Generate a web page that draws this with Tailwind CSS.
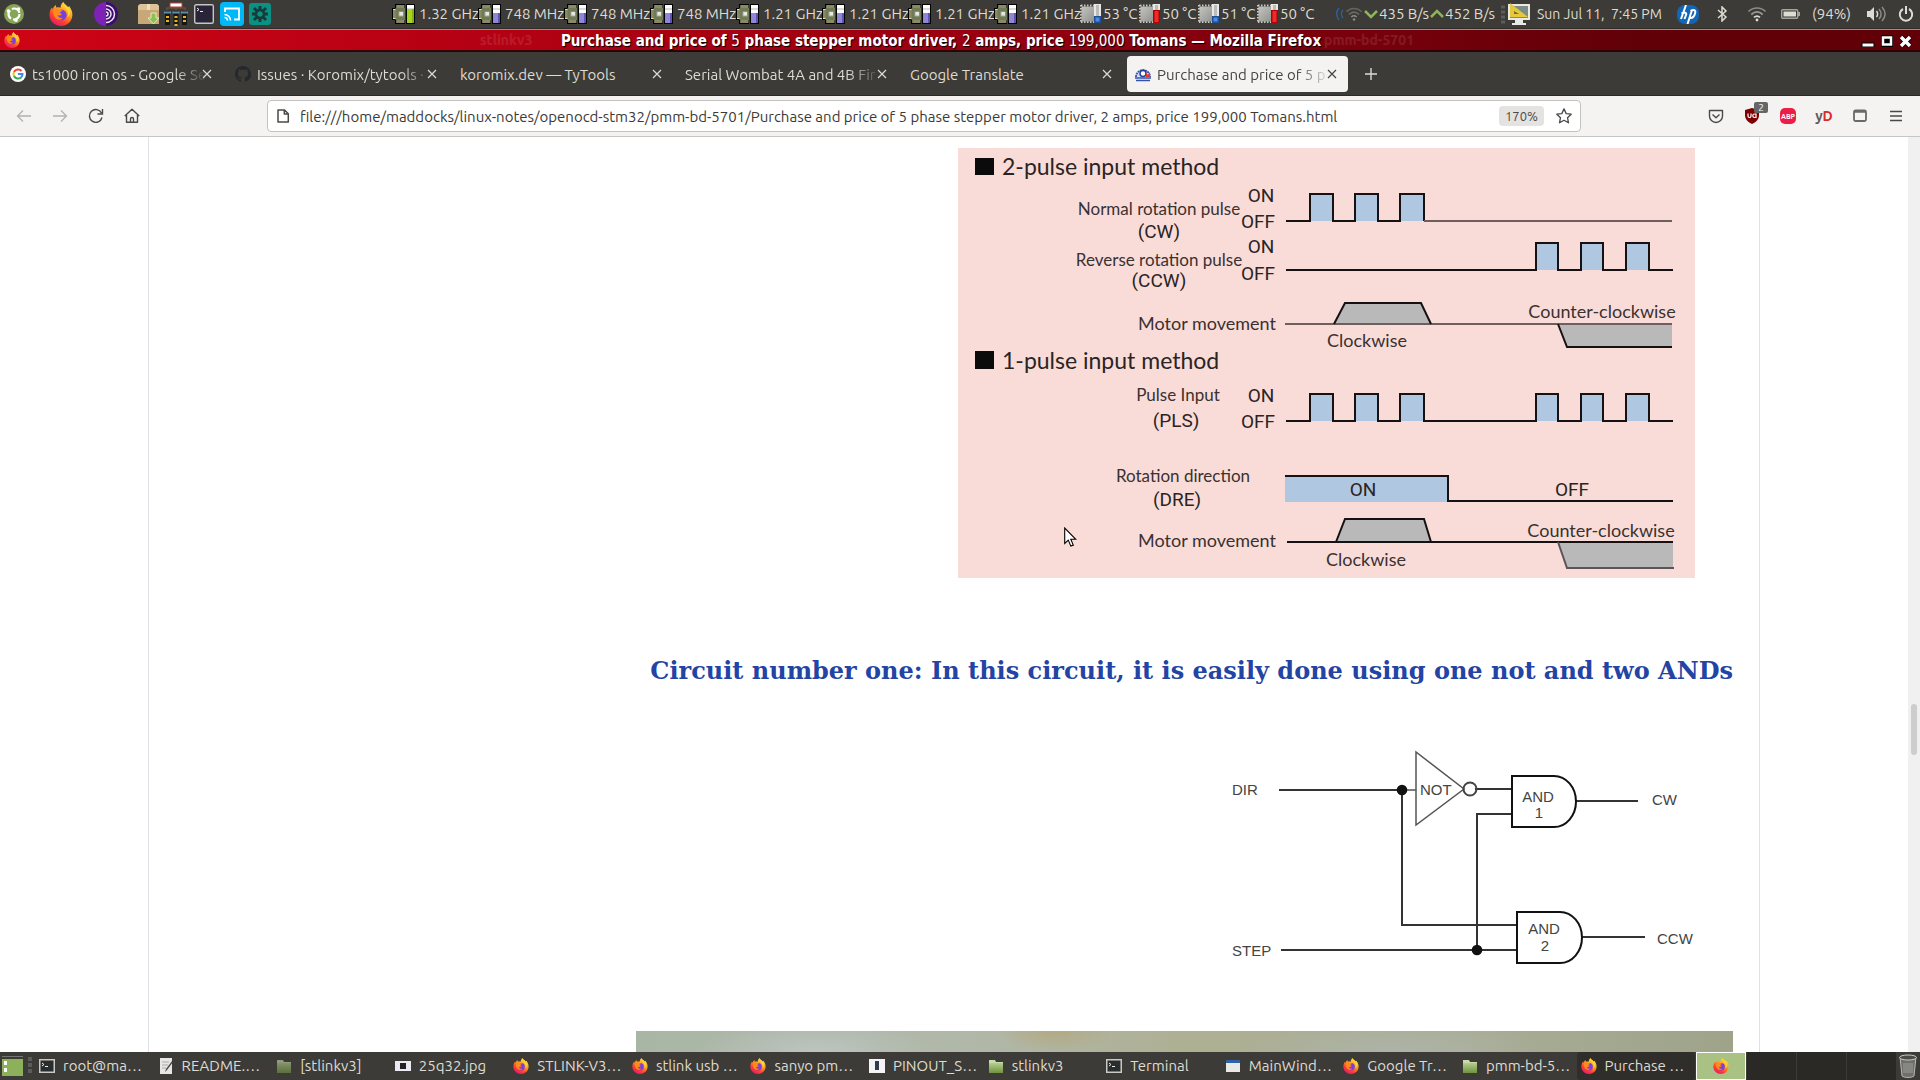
<!DOCTYPE html>
<html lang="en">
<head>
<meta charset="utf-8">
<title>Purchase and price of 5 phase stepper motor driver</title>
<script src="https://cdn.jsdelivr.net/npm/@tailwindcss/browser@4"></script>
</head>
<body class="flex h-screen flex-col overflow-hidden bg-white font-['Ubuntu','Noto_Sans',sans-serif] text-[15px] text-[#dfdbd2]">

<svg class="absolute size-0" aria-hidden="true">
  <defs>
    <linearGradient id="gFox" x1=".8" y1="0" x2=".2" y2="1"><stop offset="0" stop-color="#fff044"/><stop offset=".4" stop-color="#ff9a1f"/><stop offset=".7" stop-color="#ff4030"/><stop offset="1" stop-color="#e3107c"/></linearGradient>
    <linearGradient id="gFolder" x1="0" y1="0" x2="0" y2="1"><stop offset="0" stop-color="#b4cf8c"/><stop offset="1" stop-color="#71923f"/></linearGradient>
    <linearGradient id="gSilver" x1="0" y1="0" x2="1" y2="1"><stop offset="0" stop-color="#c4c4c0"/><stop offset="1" stop-color="#8f8f8b"/></linearGradient>
  </defs>
  <symbol id="firefox" viewBox="0 0 24 24">
    <path d="M14.500 0c.3 2 3 3 4.700 5.200l.8-1.200c2 2.500 3.600 5.500 3.400 9.200C23 19.500 18 24 12 24 5.500 24 .5 19 .5 12.800.5 9 2 6.500 3 5.500l.5 1.700C4.300 5.500 5.500 4 6.800 3l.4 2.600c1.500-.6 3.300-.4 4.300.1C11.500 3.500 12.500 1.200 14.500 0z" fill="url(#gFox)"/>
    <circle cx="12.300" cy="13" r="5.400" fill="#7b3fe0"/>
    <path d="M4.500 8c2-1.500 4.500-1.700 6-.4 1 .2 2.300.2 3 .7-.4 1.300-2.200 1.500-2.600 2.200.1 1 1.200 1.300 2.100 1.200-.4 2-3.400 2-4.400 1.300.5 2.500 3 3.500 5.300 2.800-1.600 2.800-6.400 2.500-8.300-.7C4.400 13 3.800 10 4.500 8z" fill="#ff8a1c"/>
    <path d="M17 7c2.500 2.500 2.600 6 1.400 8.500 2.400-1.500 3.500-5 2-8.500L15.500 2c.1 2 .4 3.700 1.500 5z" fill="#ffd53a"/>
  </symbol>
  <symbol id="chip" viewBox="0 0 24 20">
    <path d="M3 0h10v20H3zM0 4h16v12H0z" fill="#000"/>
    <path d="M4.500 1h8v3h-8zM4.500 16h8v3h-8zM1 5h3v10H1z" fill="#e8e4a8"/>
    <path d="M6 1v3M8 1v3M10 1v3M12 1v3M6 16v3M8 16v3M10 16v3M12 16v3M1 7h3M1 9h3M1 11h3M1 13h3" stroke="#000" stroke-width=".8"/>
    <path d="M3.500 4h10v12h-10z" fill="#6e7b56"/><path d="M6.500 7.500h5v5h-5z" fill="#a5ab98"/><path d="M7.500 8h3.500v3.500H7.500z" fill="#e6e6e2"/>
    <path d="M14 0h9v20h-9z" fill="#000"/><path d="M15 1h7v18h-7z" fill="#fff"/><path d="M15 5h7" stroke="#b5b5b5"/>
  </symbol>
  <symbol id="cpuhi" viewBox="0 0 24 20"><use href="#chip"/><path d="M15 5h7v14h-7z" fill="#a5d51f"/><path d="M20 5h2v14h-2z" fill="#83b00e"/></symbol>
  <symbol id="cpulo" viewBox="0 0 24 20"><use href="#chip"/><path d="M15 9h7v10h-7z" fill="#8f86d8"/><path d="M20 9h2v10h-2z" fill="#5f53b4"/></symbol>
  <symbol id="temp" viewBox="0 0 22 20">
    <path d="M1 1.500h16M1 18h16M1 1v18M16 1v18" stroke="#c9c9c4" stroke-width="2" stroke-dasharray="1.500 1.500"/>
    <path d="M1.500 2.500h14v15h-14z" fill="url(#gSilver)"/><path d="M14 0h7v18h-7z" fill="#e8e8e6"/><path d="M16 1h3v12h-3z" fill="#bbb"/>
  </symbol>
  <symbol id="tlo" viewBox="0 0 22 20"><use href="#temp"/><path d="M14 12h7v7h-7z" fill="#1f4f96"/><path d="M15.500 13.500h4v4h-4z" fill="#4d8be0"/></symbol>
  <symbol id="thi" viewBox="0 0 22 20"><use href="#temp"/><path d="M14 6h7v13h-7z" fill="#b40000"/><path d="M15.500 7h4v11h-4z" fill="#ee2b2b"/></symbol>
  <symbol id="wifi" viewBox="0 0 20 16"><g fill="none" stroke="currentColor" stroke-width="1.700"><path d="M1.500 5.500c5-4.700 12-4.700 17 0" opacity=".5"/><path d="M4.300 8.500c3.600-3.200 7.800-3.200 11.400 0" opacity=".6"/><path d="M7 11.300c2-1.700 4-1.700 6 0"/></g><circle cx="10" cy="14" r="1.400" fill="currentColor"/></symbol>
  <symbol id="x" viewBox="0 0 10 10"><path d="M1 1l8 8M9 1l-8 8" stroke="currentColor" stroke-width="1.200" fill="none"/></symbol>
  <symbol id="term" viewBox="0 0 16 16"><path d="M0 1h16v14H0z" fill="#c9c9c5"/><path d="M1.500 2.500h13v11h-13z" fill="#2a2d2d"/><path d="M3 5l2 1.500L3 8M6 8.500h3" stroke="#eee" fill="none"/></symbol>
  <symbol id="folder" viewBox="0 0 16 16"><path d="M1 2h6l1 2h7v4H1z" fill="#c9dbaa"/><path d="M1 5h14v10H1z" fill="url(#gFolder)"/></symbol>
</svg>

<!-- desktop panel -->
<header class="flex h-[29px] shrink-0 items-center border-b border-[#2e2d2a] bg-[#3c3b37] text-[15px] leading-5 whitespace-nowrap">
  <nav class="flex w-[392px] shrink-0 items-center" aria-label="Launchers">
    <button class="ml-1 size-5" aria-label="Menu"><svg viewBox="0 0 20 20"><circle cx="10" cy="10" r="10" fill="#87a556"/><circle cx="10" cy="10" r="5.500" fill="none" stroke="#fff" stroke-width="2.200" stroke-dasharray="9.500 2"/><circle cx="4.300" cy="7" r="1.700" fill="#fff"/><circle cx="14.500" cy="5" r="1.700" fill="#fff"/><circle cx="12" cy="16.200" r="1.700" fill="#fff"/></svg></button>
    <button class="ml-[25px] size-6" aria-label="Firefox"><svg class="size-6"><use href="#firefox"/></svg></button>
    <button class="ml-[21px] size-6" aria-label="Tor Browser"><svg viewBox="0 0 24 24"><circle cx="12" cy="12" r="12" fill="#7d22b5"/><path d="M12 0a12 12 0 0 1 0 24z" fill="#3b0d6b"/><path d="M12 3.500a8.500 8.500 0 0 1 0 17M12 7a5 5 0 0 1 0 10M12 10a2 2 0 0 1 0 4" fill="none" stroke="#efe4f7" stroke-width="1.500"/></svg></button>
    <button class="ml-[19px] h-5 w-[23px]" aria-label="Package installer"><svg viewBox="0 0 23 20"><path d="M1 2l2-2h17l2 2v18H1z" fill="#c8a878"/><path d="M1 2l2-2h17l2 2v4H1z" fill="#dcc39a"/><path d="M10 0h3v6h-3z" fill="#f1dfb9"/><path d="M14 9h5v5h3l-5.500 6L11 14h3z" fill="#8bc34a" stroke="#e9f7d2" stroke-width=".8"/></svg></button>
    <button class="ml-1 h-6 w-6" aria-label="Servers"><svg viewBox="0 0 24 24"><path d="M3 8V6h18v2M12 4v4" stroke="#6f4d3c" stroke-width="1.500" fill="none"/><path d="M6 1h12v4H6z" fill="#fff" stroke="#b3443a"/><path d="M1 9h5v14H1zM9.500 9h5v14h-5zM18 9h5v14h-5z" fill="#161616"/><path d="M0 10.500h7M8.500 10.500h7M17 10.500h7" stroke="#5b8fb0" stroke-width="2"/><path d="M2 15h3M2 19h3M10.500 15h3M10.500 19h3M19 15h3M19 19h3M10.500 23h3" stroke="#e6b422" stroke-width="2"/></svg></button>
    <button class="ml-[6px] size-5" aria-label="Terminal"><svg viewBox="0 0 20 20"><rect x=".7" y=".7" width="18.600" height="18.600" rx="1.500" fill="#2a2438" stroke="#c4c6c8" stroke-width="1.400"/><path d="M3 4l2 1.500L3 7M6 7.500h3" stroke="#eee" fill="none"/></svg></button>
    <button class="ml-[6px] size-6" aria-label="Cast"><svg viewBox="0 0 24 24"><rect width="24" height="24" rx="4" fill="#00b7f8"/><path d="M5 10V6.500h14v11h-5" fill="none" stroke="#fff" stroke-width="1.800"/><path d="M4.500 12.500a6 6 0 0 1 6 6M4.500 15.500a3 3 0 0 1 3 3" fill="none" stroke="#fff" stroke-width="1.600"/></svg></button>
    <button class="ml-[5px] size-[22px]" aria-label="Hub"><svg viewBox="0 0 22 22"><rect width="22" height="22" rx="3" fill="#0a9183"/><g stroke="#173b3a" stroke-width="3"><path d="M11 3v5M11 14v5M3 11h5M14 11h5M5 5l4 4M13 13l4 4M17 5l-4 4M9 13l-4 4"/></g><circle cx="11" cy="11" r="4" fill="none" stroke="#173b3a" stroke-width="2.500"/></svg></button>
  </nav>
  <ul class="flex shrink-0" aria-label="Processor speed">
    <li class="flex w-[86px] items-center gap-[3px]"><svg class="h-5 w-6 shrink-0"><use href="#cpuhi"/></svg>1.32 GHz</li>
    <li class="flex w-[86px] items-center gap-[3px]"><svg class="h-5 w-6 shrink-0"><use href="#cpulo"/></svg>748 MHz</li>
    <li class="flex w-[86px] items-center gap-[3px]"><svg class="h-5 w-6 shrink-0"><use href="#cpulo"/></svg>748 MHz</li>
    <li class="flex w-[86px] items-center gap-[3px]"><svg class="h-5 w-6 shrink-0"><use href="#cpulo"/></svg>748 MHz</li>
    <li class="flex w-[86px] items-center gap-[3px]"><svg class="h-5 w-6 shrink-0"><use href="#cpulo"/></svg>1.21 GHz</li>
    <li class="flex w-[86px] items-center gap-[3px]"><svg class="h-5 w-6 shrink-0"><use href="#cpulo"/></svg>1.21 GHz</li>
    <li class="flex w-[86px] items-center gap-[3px]"><svg class="h-5 w-6 shrink-0"><use href="#cpulo"/></svg>1.21 GHz</li>
    <li class="flex w-[86px] items-center gap-[3px]"><svg class="h-5 w-6 shrink-0"><use href="#cpulo"/></svg>1.21 GHz</li>
  </ul>
  <ul class="flex shrink-0" aria-label="Temperatures">
    <li class="flex w-[59px] items-center gap-[1px]"><svg class="h-5 w-[22px] shrink-0"><use href="#tlo"/></svg>53 °C</li>
    <li class="flex w-[59px] items-center gap-[1px]"><svg class="h-5 w-[22px] shrink-0"><use href="#thi"/></svg>50 °C</li>
    <li class="flex w-[59px] items-center gap-[1px]"><svg class="h-5 w-[22px] shrink-0"><use href="#tlo"/></svg>51 °C</li>
    <li class="flex w-[59px] items-center gap-[1px]"><svg class="h-5 w-[22px] shrink-0"><use href="#thi"/></svg>50 °C</li>
  </ul>
  <div class="ml-auto flex shrink-0 items-center">
    <svg class="h-5 w-7" viewBox="0 0 28 20"><path d="M4 4a9 9 0 0 0 0 12M8 6a6 6 0 0 0 0 8" fill="none" stroke="#2f5f9a" stroke-width="1.500"/><use href="#wifi" x="10" y="2" width="18" height="16" color="#8c8b87"/></svg>
    <svg class="h-5 w-4" viewBox="0 0 16 20"><path d="M2 7l6 6 6-6" fill="none" stroke="#8fb35a" stroke-width="2.500"/></svg>
    <span class="w-[50px]">435 B/s</span>
    <svg class="h-5 w-4" viewBox="0 0 16 20"><path d="M2 13l6-6 6 6" fill="none" stroke="#8fb35a" stroke-width="2.500"/></svg>
    <span class="w-[55px]">452 B/s</span>
    <svg class="h-5 w-[6px]" viewBox="0 0 6 20"><path d="M1 3h4M1 8h4M1 13h4M1 18h4" stroke="#5d5c58" stroke-width="3"/></svg>
    <svg class="ml-[1px] h-[22px] w-6" viewBox="0 0 24 22"><path d="M1 1h22v16H1z" fill="#e9e9e5"/><path d="M3 3h18v12H3z" fill="#7e8c86"/><path d="M8 17h8v3h3v2H5v-2h3z" fill="#e9e9e5"/><path d="M3 0v14h18z" fill="#e6c93a"/><path d="M7 8v3h5z" fill="#6f6b3a"/></svg>
    <time class="ml-[6px] w-[140px] text-[14px] whitespace-pre">Sun Jul 11,  7:45 PM</time>
    <svg class="h-[19px] w-[22px]" viewBox="0 0 22 19"><rect width="22" height="19" rx="8" fill="#1266b8"/><path d="M9 0L4 14M4.500 8.500c3-1.500 5.500-1 4.500 1.500L7.500 14M15 5l-4.500 14M13.500 6c4-2 5.500-.5 4.500 2.500-1 4-2.500 5-5.500 4.500" fill="none" stroke="#fff" stroke-width="2"/></svg>
    <svg class="ml-[17px] h-4 w-3" viewBox="0 0 12 16"><path d="M2 4l8 7-4 4V1l4 4-8 7" fill="none" stroke="currentColor" stroke-width="1.500"/></svg>
    <svg class="ml-[19px] h-4 w-5"><use href="#wifi"/></svg>
    <svg class="ml-[14px] h-3 w-[19px]" viewBox="0 0 19 12"><rect x=".7" y="1.700" width="16" height="8.600" rx="1" fill="none" stroke="#a6a39b" stroke-width="1.400"/><path d="M2.500 3.500h12.500v5H2.500z" fill="#dfdbd2"/><path d="M17 4h2v4h-2z" fill="#a6a39b"/></svg>
    <span class="ml-[12px] w-[55px]">(94%)</span>
    <svg class="h-4 w-5" viewBox="0 0 20 16"><path d="M0 5h3l4-4v14l-4-4H0z" fill="currentColor"/><path d="M9.500 5c1.500 2 1.500 4 0 6" stroke="currentColor" stroke-width="1.500" fill="none"/><path d="M12 3c3 3.500 3 6.500 0 10M15 1c4 4.500 4 9.500 0 14" stroke="#8c8b87" stroke-width="1.500" fill="none"/></svg>
    <button class="mr-[6px] ml-[11px] size-4" aria-label="Power"><svg viewBox="0 0 16 16"><path d="M5 3a6.200 6.200 0 1 0 6 0M8 0v8" fill="none" stroke="currentColor" stroke-width="2"/></svg></button>
  </div>
</header>

<!-- window title bar -->
<div class="relative flex h-[23px] shrink-0 items-center justify-center border-t border-b-2 border-t-[#d5767c] border-b-[#2b0205] bg-linear-to-r from-[#cf0316] via-[#9a0010] via-50% to-[#620008] to-85% px-1">
  <svg class="absolute top-[2px] left-1 size-4"><use href="#firefox"/></svg>
  <span class="absolute left-[480px] text-[14px] font-bold text-white/10" aria-hidden="true">stlinkv3</span>
  <span class="absolute left-[1324px] text-[14px] font-bold text-white/10" aria-hidden="true">pmm-bd-5701</span>
  <h1 class="mr-[38px] pt-[2px] font-['DejaVu_Sans_Condensed','DejaVu_Sans'] text-[15px] leading-5 font-bold text-white [text-shadow:1px_1px_1px_#000]">Purchase and price of <span class="font-normal">5</span> phase stepper motor driver, <span class="font-normal">2</span> amps, price <span class="font-normal">199,000</span> Tomans — Mozilla Firefox</h1>
  <div class="absolute top-[5px] right-2 flex gap-[6px]">
    <button class="h-3 w-[14px]" aria-label="Minimize"><svg viewBox="0 0 14 12"><path d="M1 8h12v4H1z" fill="#fff" stroke="#000"/></svg></button>
    <button class="size-3" aria-label="Maximize"><svg viewBox="0 0 12 12"><path d="M0 0h12v12H0z" fill="#000"/><path d="M2 2.500h8v7H2z" fill="none" stroke="#fff" stroke-width="2.500"/></svg></button>
    <button class="size-[13px]" aria-label="Close"><svg viewBox="0 0 13 13"><path d="M2 2l9 9M11 2l-9 9" stroke="#000" stroke-width="5"/><path d="M2 2l9 9M11 2l-9 9" stroke="#fff" stroke-width="3.500"/></svg></button>
  </div>
</div>

<!-- tab strip -->
<div class="flex h-11 shrink-0 items-center border-b border-[#2b2a27] bg-[#3c3b37] whitespace-nowrap" role="tablist">
  <div class="flex h-9 w-[225px] items-center px-[10px]" role="tab">
    <svg class="mr-[6px] size-4 shrink-0" viewBox="0 0 16 16"><circle cx="8" cy="8" r="8" fill="#fff"/><g fill="none" stroke-width="2"><path d="M11.500 5A4.500 4.500 0 0 0 4 6" stroke="#ea4335"/><path d="M4 6a4.500 4.500 0 0 0 0 4" stroke="#fbbc05"/><path d="M4 10a4.500 4.500 0 0 0 7 1.500" stroke="#34a853"/><path d="M11 11.500A4.500 4.500 0 0 0 12.500 8H8" stroke="#4285f4"/></g></svg>
    <span class="w-[174px] shrink-0 pt-1 [mask-image:linear-gradient(to_right,#000_83%,transparent)]">ts1000 iron os - Google Se</span>
    <button class="-ml-1 size-[10px] shrink-0" aria-label="Close tab"><svg class="size-[10px]"><use href="#x"/></svg></button>
  </div>
  <div class="flex h-9 w-[225px] items-center px-[10px]" role="tab">
    <svg class="mr-[6px] size-4 shrink-0" viewBox="0 0 16 16"><path fill="#24292e" d="M8 0C3.580 0 0 3.580 0 8c0 3.540 2.290 6.530 5.470 7.590.4.070.55-.17.55-.38 0-.19-.01-.82-.01-1.490-2.010.37-2.530-.49-2.690-.94-.09-.23-.48-.94-.82-1.130-.28-.15-.68-.52-.01-.53.63-.01 1.080.58 1.230.82.72 1.210 1.870.87 2.330.66.07-.52.28-.87.51-1.070-1.780-.2-3.640-.89-3.640-3.950 0-.87.31-1.590.82-2.150-.08-.2-.36-1.020.08-2.120 0 0 .67-.21 2.200.82.64-.18 1.320-.27 2-.27s1.360.09 2 .27c1.530-1.040 2.200-.82 2.200-.82.44 1.100.16 1.920.08 2.120.51.56.82 1.270.82 2.150 0 3.070-1.870 3.750-3.650 3.950.29.25.54.73.54 1.480 0 1.070-.01 1.930-.01 2.200 0 .21.15.46.55.38A8.010 8.010 0 0 0 16 8c0-4.420-3.580-8-8-8z"/></svg>
    <span class="w-[174px] shrink-0 pt-1 [mask-image:linear-gradient(to_right,#000_83%,transparent)]">Issues · Koromix/tytools ·</span>
    <button class="-ml-1 size-[10px] shrink-0" aria-label="Close tab"><svg class="size-[10px]"><use href="#x"/></svg></button>
  </div>
  <div class="flex h-9 w-[225px] items-center px-[10px]" role="tab">
    <span class="w-[196px] shrink-0 pt-1">koromix.dev — TyTools</span>
    <button class="-ml-1 size-[10px] shrink-0" aria-label="Close tab"><svg class="size-[10px]"><use href="#x"/></svg></button>
  </div>
  <div class="flex h-9 w-[225px] items-center px-[10px]" role="tab">
    <span class="w-[196px] shrink-0 pt-1 [mask-image:linear-gradient(to_right,#000_83%,transparent)]">Serial Wombat 4A and 4B Fir</span>
    <button class="-ml-1 size-[10px] shrink-0" aria-label="Close tab"><svg class="size-[10px]"><use href="#x"/></svg></button>
  </div>
  <div class="flex h-9 w-[225px] items-center px-[10px]" role="tab">
    <span class="w-[196px] shrink-0 pt-1">Google Translate</span>
    <button class="-ml-1 size-[10px] shrink-0" aria-label="Close tab"><svg class="size-[10px]"><use href="#x"/></svg></button>
  </div>
  <div class="mx-[2px] flex h-9 w-[221px] items-center rounded bg-[#f4f3f2] px-2 text-[#45443f]" role="tab" aria-selected="true">
    <svg class="mr-[6px] size-4 shrink-0" viewBox="0 0 16 16"><path d="M1 11a7 7 0 0 1 14 0" fill="#d7dcf2" stroke="#3452a8" stroke-width="1.800" stroke-dasharray="2 .6"/><circle cx="8" cy="7.500" r="3" fill="#fff" stroke="#23409a" stroke-width="1.500"/><path d="M11 11V6l2 3 2-3v5z" fill="#e23a30"/><path d="M0 12h16M1 14.500h14" stroke="#3452a8" stroke-width="1.500"/></svg>
    <span class="w-[174px] shrink-0 pt-1 [mask-image:linear-gradient(to_right,#000_80%,transparent)]">Purchase and price of 5 p</span>
    <button class="-ml-1 size-[10px] shrink-0" aria-label="Close tab"><svg class="size-[10px]"><use href="#x"/></svg></button>
  </div>
  <button class="ml-[14px] size-[14px]" aria-label="New tab"><svg viewBox="0 0 14 14"><path d="M7 1v12M1 7h12" stroke="currentColor" stroke-width="1.400"/></svg></button>
</div>

<!-- navigation bar -->
<div class="flex h-[41px] shrink-0 items-center border-b border-[#c8c6c4] bg-[#f4f3f2] text-[#4a4946]">
  <div class="flex w-[267px] shrink-0 items-center gap-5 pl-4">
    <button class="size-4 text-[#b3b1ae]" aria-label="Back"><svg viewBox="0 0 16 16"><path d="M15 8H1.500M7 2.500L1.500 8 7 13.500" fill="none" stroke="currentColor" stroke-width="1.300"/></svg></button>
    <button class="size-4 text-[#b3b1ae]" aria-label="Forward"><svg viewBox="0 0 16 16"><path d="M1 8h13.500M9 2.500L14.500 8 9 13.500" fill="none" stroke="currentColor" stroke-width="1.300"/></svg></button>
    <button class="size-4" aria-label="Reload"><svg viewBox="0 0 16 16"><path d="M14 9.500A6.400 6.400 0 1 1 13.500 5M14.500 1v5h-5" fill="none" stroke="currentColor" stroke-width="1.400"/></svg></button>
    <button class="size-4" aria-label="Home"><svg viewBox="0 0 16 16"><path d="M.8 8L8 1.200 15.200 8M2.500 7v7.200h11V7M6.500 14v-3a1.500 1.500 0 0 1 3 0v3" fill="none" stroke="currentColor" stroke-width="1.400" stroke-linejoin="round"/></svg></button>
  </div>
  <div class="flex h-8 min-w-0 flex-1 items-center rounded border border-[#c4c2bf] bg-white pr-2 pl-2">
    <svg class="size-[14px] shrink-0" viewBox="0 0 14 14"><path d="M2 1h6.500L12.300 4.800V13H2zM8.300 1v4h4" fill="none" stroke="currentColor" stroke-width="1.500" stroke-linejoin="round"/></svg>
    <input class="ml-[10px] min-w-0 flex-1 pt-[2px] text-[15px] text-[#3b3a37] outline-none" type="text" aria-label="Address" value="file:///home/maddocks/linux-notes/openocd-stm32/pmm-bd-5701/Purchase and price of 5 phase stepper motor driver, 2 amps, price 199,000 Tomans.html">
    <button class="h-5 w-[45px] rounded bg-[#e4e3e2] text-[13px] leading-5">170%</button>
    <button class="ml-3 size-4" aria-label="Bookmark"><svg viewBox="0 0 16 16"><path d="M8 .9l2.200 4.700 5 .6-3.700 3.500 1 5.100L8 12.300l-4.500 2.500 1-5.100L.8 6.200l5-.6z" fill="none" stroke="currentColor" stroke-width="1.300" stroke-linejoin="round"/></svg></button>
  </div>
  <div class="ml-[127px] flex shrink-0 items-center gap-5 pr-4">
    <button class="size-4" aria-label="Pocket"><svg viewBox="0 0 16 16"><path d="M1.500 2.500h13V8a6.500 6.500 0 0 1-13 0zM4.500 6.500L8 9.700l3.500-3.200" fill="none" stroke="currentColor" stroke-width="1.400" stroke-linejoin="round"/></svg></button>
    <button class="relative size-4" aria-label="uBlock Origin"><svg viewBox="0 0 16 16"><path d="M8 0l7 2v5c0 4.500-3 7-7 9-4-2-7-4.500-7-9V2z" fill="#800000"/><path d="M4 5.500V8a1.500 1.500 0 0 0 3 0V5.500M12 6h-1.500a1.700 1.700 0 0 0 0 3.500H12V6z" fill="none" stroke="#fff" stroke-width="1.200"/></svg><span class="absolute -top-[6px] left-[10px] h-[11px] w-[14px] rounded-xs bg-[#666] text-center text-[10px] leading-[11px] text-white">2</span></button>
    <button class="flex size-4 items-center justify-center rounded-[5px] bg-[#ed1e45] text-[7px] font-bold text-white">ABP</button>
    <button class="flex size-4 items-center justify-center text-[14px] font-bold text-[#5d5c5a]">y<span class="text-[#d92b2b]">D</span></button>
    <button class="size-4" aria-label="Window"><svg viewBox="0 0 16 16"><rect x="2" y="2.500" width="12" height="10.500" rx="1.500" fill="none" stroke="#6a6967" stroke-width="1.800"/><path d="M2 3.500h12" stroke="#6a6967" stroke-width="2.500"/></svg></button>
    <button class="size-4" aria-label="Menu"><svg viewBox="0 0 16 16"><path d="M2 3.500h12M2 8h12M2 12.500h12" stroke="currentColor" stroke-width="1.300"/></svg></button>
  </div>
</div>

<!-- page -->
<main class="flex min-h-0 flex-1 overflow-hidden bg-white">
  <article class="mx-[148px] flex min-w-0 flex-1 flex-col items-end border-x border-[#dee2e6] pt-[11px] pr-[26px]">
    <div class="relative mr-[38px] shrink-0">
      <svg class="block h-[430px] w-[737px] bg-[#f9dcd8]" viewBox="0 0 737 430" role="img" aria-label="Pulse input methods">
        <g fill="#0b0b0b"><path d="M17 10h19v17H17zM17 203h19v18H17z"/></g>
        <g fill="#afc7e0">
          <path d="M352 46h23v27h-23zM397 46h23v27h-23zM442 46h24v27h-24zM578 95h22v27h-22zM623 95h22v27h-22zM668 95h23v27h-23z"/>
          <path d="M352 246h23v27h-23zM397 246h23v27h-23zM442 246h24v27h-24zM578 246h22v27h-22zM623 246h22v27h-22zM668 246h23v27h-23zM327 328h163v26H327z"/>
        </g>
        <g fill="#b9b9b9"><path d="M376 176l11-21h76l10 21zM600 176h114v23H609zM378 394l9-23h79l7 23zM600 394h115v26H609z"/></g>
        <g fill="none" stroke="#161213" stroke-width="2">
          <path d="M328 73h24V46h23v27h22V46h23v27h22V46h24v27"/><path d="M466 73h248M327 176h387" stroke="#6e5f5e"/>
          <path d="M328 122h250V95h22v27h23V95h22v27h23V95h23v27h24"/>
          <path d="M376 176l11-21h76l10 21M600 176l9 23h105"/>
          <path d="M328 273h24v-27h23v27h22v-27h23v27h22v-27h24v27h112v-27h22v27h23v-27h22v27h23v-27h23v27h24"/>
          <path d="M327 328h163v25h225M329 394h386M378 394l9-23h79l7 23"/><path d="M600 394l9 26h107" stroke="#5d5555"/>
        </g>
        <g fill="#2b2424" class="font-['Lato'] text-[23px]"><text x="44" y="27">2-pulse input method</text><text x="44" y="221">1-pulse input method</text></g>
        <g fill="#3a3131" class="font-['Lato'] text-[17px]" text-anchor="middle">
          <text x="201" y="67">Normal rotation pulse</text><text x="201" y="118">Reverse rotation pulse</text>
          <text x="220" y="253">Pulse Input</text><text x="225" y="334">Rotation direction</text>
        </g>
        <g fill="#3a3131" class="font-['Lato'] text-[18px]" text-anchor="middle">
          <text x="249" y="182">Motor movement</text><text x="409" y="199">Clockwise</text><text x="644" y="170">Counter-clockwise</text>
          <text x="249" y="399">Motor movement</text><text x="408" y="418">Clockwise</text><text x="643" y="389">Counter-clockwise</text>
        </g>
        <g fill="#2b2424" class="font-['Roboto'] text-[19px]" text-anchor="middle">
          <text x="303" y="54">ON</text><text x="300" y="80">OFF</text><text x="303" y="105">ON</text><text x="300" y="132">OFF</text>
          <text x="303" y="254">ON</text><text x="300" y="280">OFF</text><text x="405" y="348">ON</text><text x="614" y="348">OFF</text>
          <text x="201" y="90">(CW)</text><text x="201" y="139">(CCW)</text><text x="218" y="279">(PLS)</text><text x="219" y="358">(DRE)</text>
        </g>
      </svg>
      <svg class="absolute top-[379px] left-[106px] h-5 w-[13px]" viewBox="0 0 13 20"><path d="M.7 1v15.500l3.600-3.400 2.500 6 2.500-1-2.500-5.800h5z" fill="#fff" stroke="#000" stroke-width="1.100"/></svg>
    </div>
    <h2 class="mt-[75px] shrink-0 font-['DejaVu_Serif',serif] text-[24px] leading-9 font-bold text-[#2344a4]">Circuit number one: In this circuit, it is easily done using one not and two ANDs</h2>
    <svg class="mt-14 mr-[29px] block h-[230px] w-[478px] shrink-0" viewBox="0 0 478 230" role="img" aria-label="Logic circuit">
      <g fill="none" stroke="#333" stroke-width="2">
        <path d="M53 45h124M176 45v135h114M55 205h235M251 205V69h34M249 44h36M350 56h62M356 192h63"/>
        <path d="M176 45h14M190 7v73l48-36z" stroke="#555" stroke-width="1.500"/><circle cx="244" cy="44" r="6.500" stroke="#444"/>
        <path d="M286 31h42a22 25.500 0 0 1 0 51h-42zM291 167h43a22 25.500 0 0 1 0 51h-43z" stroke="#111" stroke-width="2"/>
      </g>
      <circle cx="176" cy="45" r="5.300" fill="#111"/><circle cx="251" cy="205" r="5.300" fill="#111"/>
      <g fill="#444" class="font-['Liberation_Sans'] text-[15px]">
        <text x="6" y="50">DIR</text><text x="6" y="211">STEP</text><text x="194" y="50">NOT</text><text x="426" y="60">CW</text><text x="431" y="199">CCW</text>
        <g text-anchor="middle"><text x="312" y="57">AND</text><text x="313" y="73">1</text><text x="318" y="189">AND</text><text x="319" y="206">2</text></g>
      </g>
    </svg>
    <div class="mt-[56px] h-[120px] w-[1097px] shrink-0 bg-[radial-gradient(ellipse_120px_30px_at_180px_20px,#bcc4c0,transparent),radial-gradient(ellipse_60px_20px_at_420px_0px,#b3a985,transparent),radial-gradient(ellipse_150px_30px_at_760px_20px,#adb3a8,transparent),linear-gradient(to_right,#a9b6a6,#b1b8a9_30%,#aeb093_50%,#a9ad96_75%,#9ea38a)]" role="img" aria-label="Circuit photo"></div>
  </article>
  <div class="w-3 shrink-0 bg-[#f0f0f0] px-[3px] pt-[567px]"><div class="h-[51px] rounded-full bg-[#cdcdcd]"></div></div>
</main>

<!-- task bar -->
<footer class="flex h-7 shrink-0 items-center bg-[#3c3b37] whitespace-nowrap">
  <button class="ml-[2px] h-5 w-[21px] shrink-0" aria-label="Show desktop"><svg viewBox="0 0 21 20"><path d="M0 0h21v1H0z" fill="#77766f"/><path d="M0 3h21v17H0z" fill="#8db05a"/><path d="M2 5h3v4H2zM2 12h3v4H2z" fill="#fff"/></svg></button>
  <svg class="mr-[3px] ml-[5px] h-5 w-1 shrink-0" viewBox="0 0 4 20"><path d="M0 3h4M0 9h4M0 15h4" stroke="#5d5c58" stroke-width="4"/></svg>
  <nav class="flex h-full min-w-0 flex-1" aria-label="Windows">
    <button class="flex h-full min-w-0 flex-1 items-center gap-2 pl-1"><svg class="size-4 shrink-0"><use href="#term"/></svg>root@ma…</button>
    <button class="flex h-full min-w-0 flex-1 items-center gap-2 pl-1"><svg class="size-4 shrink-0" viewBox="0 0 16 16"><path d="M2 0h12v16H2z" fill="#e6e6e4"/><path d="M4 4h7M4 7h6M4 10h4" stroke="#aaa"/><path d="M15 4l-6 8-2 2 1-3 6-8z" fill="#444"/></svg>README.…</button>
    <button class="flex h-full min-w-0 flex-1 items-center gap-2 pl-1"><svg class="size-4 shrink-0 opacity-60"><use href="#folder"/></svg>[stlinkv3]</button>
    <button class="flex h-full min-w-0 flex-1 items-center gap-2 pl-1"><svg class="size-4 shrink-0" viewBox="0 0 16 16"><path d="M0 3h16v10H0z" fill="#eceaf2"/><path d="M5 5h6v6H5z" fill="#222"/></svg>25q32.jpg</button>
    <button class="flex h-full min-w-0 flex-1 items-center gap-2 pl-1"><svg class="size-4 shrink-0"><use href="#firefox"/></svg>STLINK-V3…</button>
    <button class="flex h-full min-w-0 flex-1 items-center gap-2 pl-1"><svg class="size-4 shrink-0"><use href="#firefox"/></svg>stlink usb …</button>
    <button class="flex h-full min-w-0 flex-1 items-center gap-2 pl-1"><svg class="size-4 shrink-0"><use href="#firefox"/></svg>sanyo pm…</button>
    <button class="flex h-full min-w-0 flex-1 items-center gap-2 pl-1"><svg class="size-4 shrink-0" viewBox="0 0 16 16"><path d="M0 1h16v14H0z" fill="#f4f4f6"/><path d="M6 3h4v9H6z" fill="#333b4a"/></svg>PINOUT_S…</button>
    <button class="flex h-full min-w-0 flex-1 items-center gap-2 pl-1"><svg class="size-4 shrink-0"><use href="#folder"/></svg>stlinkv3</button>
    <button class="flex h-full min-w-0 flex-1 items-center gap-2 pl-1"><svg class="size-4 shrink-0"><use href="#term"/></svg>Terminal</button>
    <button class="flex h-full min-w-0 flex-1 items-center gap-2 pl-1"><svg class="size-4 shrink-0" viewBox="0 0 16 16"><path d="M1 2h14v12H1z" fill="#e9e9e6"/><path d="M1 2h14v3H1z" fill="#2f62a8"/></svg>MainWind…</button>
    <button class="flex h-full min-w-0 flex-1 items-center gap-2 pl-1"><svg class="size-4 shrink-0"><use href="#firefox"/></svg>Google Tr…</button>
    <button class="flex h-full min-w-0 flex-1 items-center gap-2 pl-1"><svg class="size-4 shrink-0"><use href="#folder"/></svg>pmm-bd-5…</button>
    <button class="flex h-full min-w-0 flex-1 items-center gap-2 rounded bg-[#2f2e2b] pl-1"><svg class="size-4 shrink-0"><use href="#firefox"/></svg>Purchase …</button>
  </nav>
  <div class="ml-[1px] flex h-full shrink-0 gap-px" aria-label="Workspaces">
    <button class="flex h-full w-[50px] items-center justify-center border border-white bg-[#a9c284]" aria-label="Workspace 1"><svg class="size-4"><use href="#firefox"/></svg></button>
    <button class="h-full w-[49px] bg-[#2a2926]" aria-label="Workspace 2"></button>
    <button class="h-full w-[49px] bg-[#2a2926]" aria-label="Workspace 3"></button>
    <button class="h-full w-[49px] bg-[#2a2926]" aria-label="Workspace 4"></button>
  </div>
  <button class="mx-[2px] h-6 w-5 shrink-0" aria-label="Trash"><svg viewBox="0 0 20 24"><path d="M2 3l2 19c3 2 9 2 12 0l2-19z" fill="#6f6f6c" stroke="#b8b8b4"/><path d="M5 9h10v10H5z" fill="#868683"/><ellipse cx="10" cy="3.500" rx="8.500" ry="2.500" fill="#4b4b48" stroke="#c9c9c5"/></svg></button>
</footer>
</body>
</html>
